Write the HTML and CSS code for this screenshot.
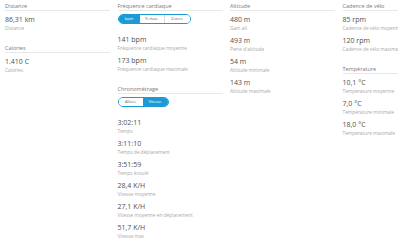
FILE: index.html
```html
<!DOCTYPE html>
<html lang="fr">
  <head>
    <meta charset="UTF-8" />
    <meta name="viewport" content="width=device-width, initial-scale=1.0" />
    <title>Statistiques de l'activité</title>
    <link rel="stylesheet" href="styles.css">
  </head>
  <body>
    <div class="board">
      <div class="col">
        <section class="group">
          <h3 class="group-title">Distance</h3>
          <div class="stat"><div class="stat-value">86,31 km</div><div class="stat-label">Distance</div></div>
        </section>
        <section class="group">
          <h3 class="group-title">Calories</h3>
          <div class="stat"><div class="stat-value">1.410 C</div><div class="stat-label">Calories</div></div>
        </section>
      </div>

      <div class="col">
        <section class="group">
          <h3 class="group-title">Fréquence cardiaque</h3>
          <div class="toggle">
            <span class="seg active w-bpm">bpm</span>
            <span class="seg w-max">% max.</span>
            <span class="seg w-zones">Zones</span>
          </div>
          <div class="stat"><div class="stat-value">141 bpm</div><div class="stat-label">Fréquence cardiaque moyenne</div></div>
          <div class="stat"><div class="stat-value">173 bpm</div><div class="stat-label">Fréquence cardiaque maximale</div></div>
        </section>
        <section class="group">
          <h3 class="group-title">Chronométrage</h3>
          <div class="toggle">
            <span class="seg w-allure">Allure</span>
            <span class="seg active w-vitesse">Vitesse</span>
          </div>
          <div class="stat"><div class="stat-value">3:02:11</div><div class="stat-label">Temps</div></div>
          <div class="stat"><div class="stat-value">3:11:10</div><div class="stat-label">Temps de déplacement</div></div>
          <div class="stat"><div class="stat-value">3:51:59</div><div class="stat-label">Temps écoulé</div></div>
          <div class="stat"><div class="stat-value">28,4 K/H</div><div class="stat-label">Vitesse moyenne</div></div>
          <div class="stat"><div class="stat-value">27,1 K/H</div><div class="stat-label">Vitesse moyenne en déplacement</div></div>
          <div class="stat"><div class="stat-value">51,7 K/H</div><div class="stat-label">Vitesse max</div></div>
        </section>
      </div>

      <div class="col">
        <section class="group">
          <h3 class="group-title">Altitude</h3>
          <div class="stat"><div class="stat-value">480 m</div><div class="stat-label">Gain alt</div></div>
          <div class="stat"><div class="stat-value">493 m</div><div class="stat-label">Perte d'altitude</div></div>
          <div class="stat"><div class="stat-value">54 m</div><div class="stat-label">Altitude minimale</div></div>
          <div class="stat"><div class="stat-value">143 m</div><div class="stat-label">Altitude maximale</div></div>
        </section>
      </div>

      <div class="col">
        <section class="group">
          <h3 class="group-title">Cadence de vélo</h3>
          <div class="stat"><div class="stat-value">85 rpm</div><div class="stat-label">Cadence de vélo moyenne</div></div>
          <div class="stat"><div class="stat-value">120 rpm</div><div class="stat-label">Cadence de vélo maximale</div></div>
        </section>
        <section class="group">
          <h3 class="group-title">Température</h3>
          <div class="stat"><div class="stat-value">10,1 °C</div><div class="stat-label">Température moyenne</div></div>
          <div class="stat"><div class="stat-value">7,0 °C</div><div class="stat-label">Température minimale</div></div>
          <div class="stat"><div class="stat-value">18,0 °C</div><div class="stat-label">Température maximale</div></div>
        </section>
      </div>
    </div>
  </body>
</html>
```

FILE: styles.css
```css
body {
  margin: 0;
  font-family: "Open Sans", sans-serif;
  background: #fff;
}
.board {
  display: grid;
  grid-template-columns: repeat(4, 105px);
  column-gap: 7.5px;
  align-items: start;
  padding: 3px 0 0 5px;
  height: 247px;
  overflow: hidden;
}
.col {
  min-width: 0;
}
.group {
  margin-bottom: 13px;
}
.group-title {
  margin: 0;
  font-size: 5.5px;
  font-weight: 400;
  line-height: 7px;
  color: #7a7a7a;
  border-bottom: 1px solid #e8e8e8;
  white-space: nowrap;
}
.stat {
  margin-top: 3px;
  white-space: nowrap;
}
.stat-value {
  font-size: 7px;
  line-height: 11px;
  color: #505050;
}
.stat-label {
  font-size: 4.8px;
  line-height: 7px;
  color: #a8a8a8;
}
.toggle {
  display: flex;
  width: fit-content;
  margin: 3px 0 10px;
  height: 10px;
  box-sizing: border-box;
  border: 1px solid #1a9ad6;
  border-radius: 5px;
  overflow: hidden;
}
.seg {
  font-size: 4px;
  line-height: 8px;
  text-align: center;
  color: #666;
  background: #fff;
}
.seg + .seg {
  border-left: 1px solid #dcdcdc;
}
.seg.active {
  background: #1a9ad6;
  color: #fff;
  border-left: none;
}
.seg.active + .seg {
  border-left: none;
}
.w-bpm { width: 21px; }
.w-max { width: 24px; }
.w-zones { width: 25px; }
.w-allure { width: 24px; }
.w-vitesse { width: 25px; }
```
